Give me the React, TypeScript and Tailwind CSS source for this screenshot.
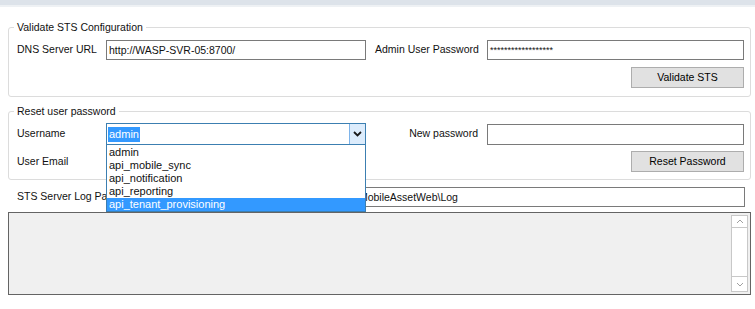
import React from 'react';

const font = "font-['Liberation_Sans',Arial,sans-serif]";

function TextBox({ value, className = '' }: { value?: string; className?: string }) {
  return (
    <div className={`shrink-0 h-[20px] border border-[#7a7a7a] bg-white px-[2px] leading-[18px] whitespace-nowrap overflow-hidden ${className}`}>
      {value}
    </div>
  );
}

function WinButton({ label }: { label: string }) {
  return (
    <button className="shrink-0 w-[113px] h-[21px] border border-[#adadad] bg-[#e1e1e1] text-[10.5px] leading-[19px] text-black">
      {label}
    </button>
  );
}

const users = ['admin', 'api_mobile_sync', 'api_notification', 'api_reporting', 'api_tenant_provisioning'];

export default function App() {
  return (
    <div className={`relative w-[755px] h-[309px] overflow-hidden bg-white text-[10.5px] text-[#111] whitespace-nowrap ${font}`}>
      {/* window chrome strip */}
      <div className="h-[5px] bg-[#dde3ea]" />
      <div className="h-[2px] bg-[#eef1f4]" />

      <div className="w-[743px] ml-[8px]">
        {/* Validate STS Configuration */}
        <fieldset className="mt-[13px] border border-[#dcdcdc] rounded-[3px] pl-[8px] pr-[6px] pt-[6px] pb-[8px]">
          <legend className="ml-[-3px] px-[3px] leading-[14px]">Validate STS Configuration</legend>
          <div className="flex items-center">
            <span className="shrink-0 w-[89px]">DNS Server URL</span>
            <TextBox value="http://WASP-SVR-05:8700/" className="w-[260px]" />
            <span className="shrink-0 w-[121px] pl-[9px]">Admin User Password</span>
            <TextBox value="******************" className="w-[257px] text-[9px]" />
          </div>
          <div className="flex justify-end mt-[7px]">
            <WinButton label="Validate STS" />
          </div>
        </fieldset>

        {/* Reset user password */}
        <fieldset className="mt-[7px] border border-[#dcdcdc] rounded-[3px] pl-[8px] pr-[6px] pt-[5px] pb-[7px]">
          <legend className="ml-[-3px] px-[3px] leading-[14px]">Reset user password</legend>
          <div className="flex items-center">
            <span className="shrink-0 w-[89px]">Username</span>
            <div className="shrink-0 w-[260px] h-[22px] border border-[#3c7fb1] bg-white flex">
              <div className="flex-1 flex items-center pl-[1px]">
                <span className="bg-[#3399ff] text-white px-[1px] leading-[15px] text-[11px]">admin</span>
              </div>
              <div className="w-[16px] h-full border-l border-[#7eb4ea] bg-[#dcecfc] flex items-center justify-center">
                <svg width="9" height="6" viewBox="0 0 9 6">
                  <path d="M1 1 L4.5 4.5 L8 1" fill="none" stroke="#1a1a1a" strokeWidth="1.8" />
                </svg>
              </div>
            </div>
            <span className="shrink-0 w-[121px] pr-[9px] text-right">New password</span>
            <TextBox className="w-[257px] h-[21px]" />
          </div>
          <div className="flex items-center justify-between mt-[6px]">
            <span>User Email</span>
            <WinButton label="Reset Password" />
          </div>
        </fieldset>

        {/* log path */}
        <div className="flex items-center mt-[7px] pl-[9px] pr-[6px]">
          <span className="shrink-0 w-[137px]">STS Server Log Path</span>
          <TextBox value="C:\Program Files (x86)\Wasp Technologies\MobileAssetWeb\Log" className="flex-1" />
        </div>

        {/* log output */}
        <div className="mt-[5px] h-[83px] border border-[#646464] bg-[#f0f0f0] flex justify-end pr-[2px] py-[2px]">
          <div className="w-[17px] h-full border border-[#c8c8c8] bg-white flex flex-col justify-between">
            <div className="h-[12px] border-b border-[#c8c8c8] flex items-center justify-center">
              <svg width="8" height="5" viewBox="0 0 8 5">
                <path d="M1 4 L4 1 L7 4" fill="none" stroke="#a0a0a0" strokeWidth="1" />
              </svg>
            </div>
            <div className="h-[15px] border-t border-[#c8c8c8] flex items-center justify-center">
              <svg width="8" height="5" viewBox="0 0 8 5">
                <path d="M1 1 L4 4 L7 1" fill="none" stroke="#a0a0a0" strokeWidth="1" />
              </svg>
            </div>
          </div>
        </div>
      </div>

      {/* open combo dropdown list */}
      <div className="absolute left-[106px] top-[144px] w-[260px] border border-[#3c7fb1] bg-white text-[11px] leading-[13px] text-[#111] pt-[1px]">
        {users.map((u, i) => (
          <div key={u} className={`pl-[2px] h-[13px] ${i === users.length - 1 ? 'bg-[#3399ff] text-white' : ''}`}>
            {u}
          </div>
        ))}
      </div>
    </div>
  );
}
